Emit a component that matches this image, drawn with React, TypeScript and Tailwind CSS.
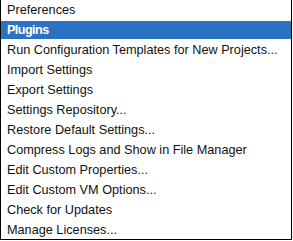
import React from "react";

const items = [
  "Preferences",
  "Plugins",
  "Run Configuration Templates for New Projects...",
  "Import Settings",
  "Export Settings",
  "Settings Repository...",
  "Restore Default Settings...",
  "Compress Logs and Show in File Manager",
  "Edit Custom Properties...",
  "Edit Custom VM Options...",
  "Check for Updates",
  "Manage Licenses...",
];

export default function App() {
  return (
    <div className="w-[293px] h-[241px] bg-white">
      <div
        className="w-[292px] flex flex-col border-l border-r border-b border-black bg-white"
        style={{ fontFamily: '"Liberation Sans", Arial, sans-serif' }}
      >
        {items.map((label, i) =>
          i === 1 ? (
            <div key={label} className="h-[20px] py-[1px]">
              <div className="h-[18px] bg-[#2b72c2] text-white font-bold text-[12.7px] leading-[18px] pl-[6px] tracking-[-0.6px]">
                {label}
              </div>
            </div>
          ) : (
            <div
              key={label}
              className={`${i === items.length - 1 ? "h-[19px]" : "h-[20px]"} text-[12.7px] leading-[20px] pl-[6px] text-[#111] whitespace-nowrap overflow-hidden`}
            >
              {label}
            </div>
          )
        )}
      </div>
    </div>
  );
}
